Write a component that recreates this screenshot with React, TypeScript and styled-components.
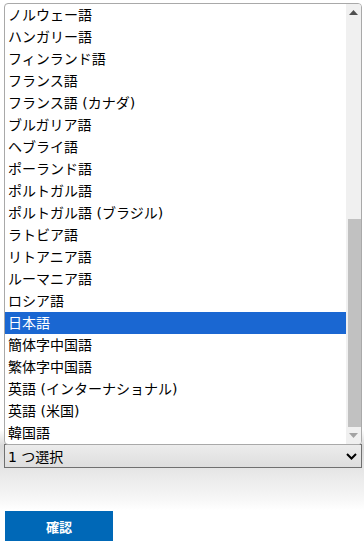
import styled, { createGlobalStyle } from 'styled-components';

const GlobalStyle = createGlobalStyle`
  body {
    margin: 0;
    background: #ffffff;
    font-family: "DejaVu Sans", "Noto Sans CJK JP", sans-serif;
  }
`;

const languages = [
  'ノルウェー語',
  'ハンガリー語',
  'フィンランド語',
  'フランス語',
  'フランス語 (カナダ)',
  'ブルガリア語',
  'ヘブライ語',
  'ポーランド語',
  'ポルトガル語',
  'ポルトガル語 (ブラジル)',
  'ラトビア語',
  'リトアニア語',
  'ルーマニア語',
  'ロシア語',
  '日本語',
  '簡体字中国語',
  '繁体字中国語',
  '英語 (インターナショナル)',
  '英語 (米国)',
  '韓国語'
];

const Page = styled.div({
  display: 'flex',
  flexDirection: 'column',
  alignItems: 'flex-start',
  width: '364px',
  height: '546px',
  paddingTop: '3px',
  boxSizing: 'border-box',
  background: 'linear-gradient(to bottom, #ffffff 0px, #ffffff 430px, #d9d9d9 446px, #f6f6f6 498px, #ffffff 510px)'
});

const Popup = styled.div({
  display: 'flex',
  marginLeft: '4px',
  width: '358px',
  border: '1px solid #a9a9a9',
  borderRadius: '4px',
  background: '#ffffff',
  overflow: 'hidden',
  boxSizing: 'border-box',
  position: 'relative',
  zIndex: 1
});

const List = styled.ul({
  flex: 1,
  margin: 0,
  padding: 0,
  listStyle: 'none'
});

const Option = styled.li<{ $selected?: boolean }>(({ $selected }) => ({
  height: '22px',
  lineHeight: '22px',
  paddingLeft: '3px',
  fontSize: '14px',
  fontFamily: '"DejaVu Sans", "Noto Sans CJK JP", sans-serif',
  color: $selected ? '#ffffff' : '#000000',
  background: $selected ? '#1a67d2' : 'transparent',
  whiteSpace: 'nowrap'
}));

const Scrollbar = styled.div({
  display: 'flex',
  flexDirection: 'column',
  width: '15px',
  background: '#f0f0f0'
});

const ArrowButton = styled.div({
  display: 'flex',
  alignItems: 'center',
  justifyContent: 'center',
  height: '17px'
});

const Track = styled.div({
  flex: 1,
  display: 'flex',
  flexDirection: 'column',
  paddingTop: '198px'
});

const Thumb = styled.div({
  flex: 1,
  marginLeft: '2px',
  background: '#c1c1c1'
});

const SelectBox = styled.div({
  display: 'flex',
  alignItems: 'center',
  justifyContent: 'space-between',
  marginLeft: '4px',
  marginTop: '-1px',
  width: '358px',
  height: '24px',
  padding: '0 4px 0 3px',
  border: '1px solid #707070',
  boxSizing: 'border-box',
  background: 'linear-gradient(to bottom, #ececec, #dedede)',
  fontSize: '14px',
  fontFamily: '"DejaVu Sans", "Noto Sans CJK JP", sans-serif',
  color: '#000000'
});

const ConfirmButton = styled.button({
  marginTop: '43px',
  marginLeft: '5px',
  width: '108px',
  height: '30px',
  border: 'none',
  background: '#0068b7',
  color: '#ffffff',
  fontSize: '13px',
  fontWeight: 'bold',
  fontFamily: '"Noto Sans CJK JP", sans-serif',
  padding: 0
});

function Arrow({ up, color }: { up?: boolean; color: string }) {
  return (
    <svg width="9" height="5" viewBox="0 0 9 5">
      <path d={up ? 'M0 5 L4.5 0 L9 5 Z' : 'M0 0 L4.5 5 L9 0 Z'} fill={color} />
    </svg>
  );
}

export default function App() {
  return (
    <>
      <GlobalStyle />
      <Page>
        <Popup>
          <List>
            {languages.map((name) => (
              <Option key={name} $selected={name === '日本語'}>
                {name}
              </Option>
            ))}
          </List>
          <Scrollbar>
            <ArrowButton>
              <Arrow up color="#505050" />
            </ArrowButton>
            <Track>
              <Thumb />
            </Track>
            <ArrowButton>
              <Arrow color="#a3a3a3" />
            </ArrowButton>
          </Scrollbar>
        </Popup>
        <SelectBox>
          <span>1 つ選択</span>
          <svg width="11" height="7" viewBox="0 0 11 7">
            <path d="M1 1 L5.5 5.5 L10 1" stroke="#000" strokeWidth="2" fill="none" />
          </svg>
        </SelectBox>
        <ConfirmButton>確認</ConfirmButton>
      </Page>
    </>
  );
}
